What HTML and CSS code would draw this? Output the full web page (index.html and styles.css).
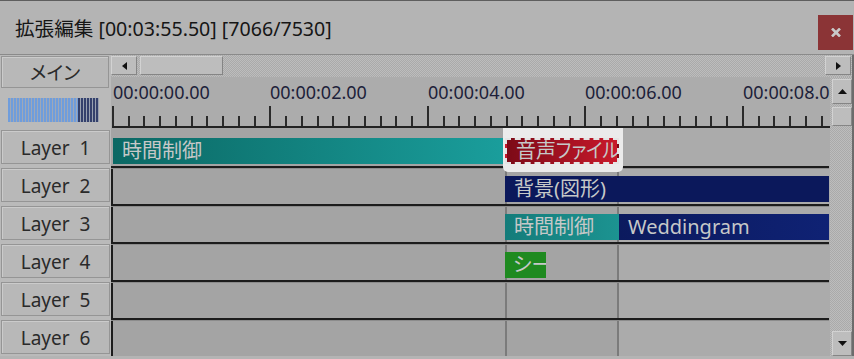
FILE: index.html
```html
<!DOCTYPE html>
<html lang="ja">
<head>
<meta charset="utf-8">
<title>拡張編集</title>
<link rel="stylesheet" href="styles.css">
</head>
<body>
<div class="window">
  <header class="titlebar">
    <span class="title">拡張編集 [00:03:55.50] [7066/7530]</span>
    <div class="close"><svg width="10" height="9" viewBox="0 0 10 9"><path d="M1 0.5L9 8.5M9 0.5L1 8.5" stroke="#c9c9c9" stroke-width="2.6"/></svg></div>
  </header>
  <div class="main">
    <div class="side-top">
      <div class="btn main-btn">メイン</div>
      <div class="meter-panel"><div class="meter"><div class="meter-low"></div><div class="meter-high"></div></div></div>
    </div>
    <div class="hscroll">
      <div class="sb-btn sb-left"><svg width="5" height="8" viewBox="0 0 5 8"><path d="M5 0V8L0 4Z" fill="#111"/></svg></div>
      <div class="sb-btn sb-thumb"></div>
      <div class="sb-track"></div>
      <div class="sb-btn sb-right"><svg width="5" height="8" viewBox="0 0 5 8"><path d="M0 0V8L5 4Z" fill="#111"/></svg></div>
    </div>
    <div class="ruler">
      <span class="tick-label" style="left:2px">00:00:00.00</span>
      <span class="tick-label" style="left:159px">00:00:02.00</span>
      <span class="tick-label" style="left:317px">00:00:04.00</span>
      <span class="tick-label" style="left:474px">00:00:06.00</span>
      <span class="tick-label" style="left:632px">00:00:08.00</span>
      <svg class="ticks" width="719" height="51" viewBox="0 0 719 51">
        <path d="M18 39V49M33 39V49M49 39V49M65 39V49M81 39V49M96 39V49M112 39V49M128 39V49M144 39V49M175 39V49M191 39V49M207 39V49M222 39V49M238 39V49M254 39V49M270 39V49M285 39V49M301 39V49M333 39V49M348 39V49M364 39V49M380 39V49M396 39V49M411 39V49M427 39V49M443 39V49M459 39V49M490 39V49M506 39V49M522 39V49M537 39V49M553 39V49M569 39V49M585 39V49M600 39V49M616 39V49M648 39V49M663 39V49M679 39V49M695 39V49M711 39V49M2 29V49M159 29V49M317 29V49M474 29V49M632 29V49" stroke="#2a2a2a" stroke-width="2" fill="none"/>
        <rect x="1" y="49" width="718" height="2" fill="#222"/>
      </svg>
    </div>
    <div class="vscroll">
      <div class="sb-btn vs-up"><svg width="9" height="5" viewBox="0 0 9 5"><path d="M0 5H9L4.5 0Z" fill="#111"/></svg></div>
      <div class="sb-btn vs-thumb"></div>
      <div class="vs-track"></div>
      <div class="sb-btn vs-down"><svg width="9" height="5" viewBox="0 0 9 5"><path d="M0 0H9L4.5 5Z" fill="#111"/></svg></div>
    </div>
    <div class="layer-heads">
      <div class="btn layer-btn">Layer  1</div>
      <div class="btn layer-btn">Layer  2</div>
      <div class="btn layer-btn">Layer  3</div>
      <div class="btn layer-btn">Layer  4</div>
      <div class="btn layer-btn">Layer  5</div>
      <div class="btn layer-btn">Layer  6</div>
    </div>
    <div class="tracks">
      <div class="vline" style="left:394px"></div>
      <div class="vline" style="left:506px"></div>
      <div class="row">
        <div class="obj teal-dark" style="left:2px;width:392px">時間制御</div>
        <div class="sel-glow" style="left:392px;width:120px"></div>
        <div class="obj audio selected" style="left:394px;width:114px">音声<span class="kana">ファイル</span></div>
      </div>
      <div class="row sep">
        <div class="obj navy" style="left:394px;width:324px">背景(図形)</div>
      </div>
      <div class="row sep">
        <div class="obj teal" style="left:394px;width:114px">時間制御</div>
        <div class="obj navy-light" style="left:508px;width:210px">Weddingram</div>
      </div>
      <div class="row sep">
        <div class="obj green" style="left:394px;width:41px">シー</div>
      </div>
      <div class="row sep"></div>
      <div class="row sep"></div>
    </div>
  </div>
</div>
</body>
</html>
```

FILE: styles.css
```css
* { box-sizing: border-box; margin: 0; padding: 0; }

html, body {
  width: 854px;
  height: 359px;
  overflow: hidden;
}

body {
  background: #b4b4b4;
  font-family: "Noto Sans", "Noto Sans CJK JP", sans-serif;
  color: #1a1a1a;
}

.window {
  width: 854px;
  height: 359px;
  display: flex;
  flex-direction: column;
  border-top: 1px solid #5e5e5e;
}

/* ---------- title bar ---------- */
.titlebar {
  flex: none;
  height: 54px;
  display: flex;
  align-items: flex-start;
  justify-content: space-between;
  padding-left: 15px;
  border-bottom: 1px solid #8a8a8a;
}

.title {
  font-size: 19.6px;
  line-height: 20px;
  margin-top: 18px;
  white-space: pre;
  color: #161616;
}

.close {
  width: 35px;
  height: 35px;
  margin-top: 14px;
  margin-right: 1px;
  background: #8b3436;
  display: flex;
  align-items: center;
  justify-content: center;
}

/* ---------- main grid ---------- */
.main {
  flex: none;
  display: grid;
  grid-template-columns: 111px 719px 22px;
  grid-template-rows: 22px 51px 228px;
  border-right: 2px solid #6c6c6c;
  background: #bababa;
}

.btn {
  background: #b8b8b8;
  border: 1px solid #959595;
  box-shadow: inset 1px 1px 0 #cbcbcb;
  display: flex;
  align-items: center;
  justify-content: center;
  color: #2a2a2a;
}

.side-top {
  grid-row: 1 / 3;
  grid-column: 1;
  display: flex;
  flex-direction: column;
  padding: 1px 2px 0 1px;
}

.main-btn {
  height: 32px;
  font-size: 19px;
  font-feature-settings: "palt";
}

.meter-panel {
  margin-top: 2px;
  flex: 1;
  display: flex;
  align-items: flex-start;
  padding: 8px 0 0 7px;
}

.meter {
  width: 91px;
  height: 24px;
  display: flex;
}

.meter-low {
  width: 70px;
  background: repeating-linear-gradient(to right, #6f9ddc 0 2px, #9fa8b8 2px 3px);
}

.meter-high {
  flex: 1;
  background: repeating-linear-gradient(to right, #34406c 0 2px, #98a0b0 2px 3px);
}

/* ---------- scrollbars ---------- */
.hscroll, .vscroll {
  background-color: #bdbdbd;
  background-image: repeating-conic-gradient(#aaaaaa 0 25%, transparent 0 50%);
  background-size: 2px 2px;
}

.hscroll {
  grid-row: 1;
  grid-column: 2 / 4;
  display: flex;
  align-items: flex-start;
  padding-top: 1px;
}

.sb-btn {
  background: #bdbdbd;
  border: 1px solid;
  border-color: #d2d2d2 #858585 #858585 #d2d2d2;
  display: flex;
  align-items: center;
  justify-content: center;
}

.sb-left { width: 26px; height: 19px; }
.sb-thumb { width: 83px; height: 19px; margin-left: 3px; }
.sb-track { flex: 1; }
.sb-right { width: 26px; height: 19px; margin-right: 1px; }

.vscroll {
  grid-row: 2 / 4;
  grid-column: 3;
  display: flex;
  flex-direction: column;
  padding-left: 2px;
}

.vs-up { height: 25px; margin-top: 2px; }
.vs-thumb { height: 19px; margin-top: 3px; }
.vs-track { flex: 1; }
.vs-down { height: 25px; }

/* ---------- ruler ---------- */
.ruler {
  grid-row: 2;
  grid-column: 2;
  position: relative;
  overflow: hidden;
  background: #acacac;
}

.tick-label {
  position: absolute;
  top: 6px;
  font-size: 18px;
  line-height: 18px;
  color: #1d1f3a;
  white-space: nowrap;
}

.ticks {
  position: absolute;
  left: 0;
  top: 0;
}

/* ---------- layer headers ---------- */
.layer-heads {
  grid-row: 3;
  grid-column: 1;
  display: flex;
  flex-direction: column;
  padding-left: 1px;
  padding-right: 1px;
}

.layer-btn {
  height: 34px;
  margin: 2px 0;
  font-size: 19px;
  white-space: pre;
  padding-top: 1px;
}

/* ---------- tracks ---------- */
.tracks {
  grid-row: 3;
  grid-column: 2;
  position: relative;
  overflow: hidden;
  background: linear-gradient(to right, #a4a4a4 507px, #ababab 507px);
}

.vline {
  position: absolute;
  top: 0;
  bottom: 0;
  width: 2px;
  background: #7b7b7b;
}

.row {
  position: relative;
  height: 38px;
}

.row.sep {
  box-shadow: inset 2px 0 0 #1c1c1c;
}

.row.sep::before {
  content: "";
  position: absolute;
  left: 0;
  right: 1px;
  top: 0;
  height: 2px;
  background: #1c1c1c;
  box-shadow: 0 1px 0 #8c8c8c;
}

.obj {
  position: absolute;
  top: 10px;
  height: 26px;
  padding-left: 9px;
  font-size: 20px;
  line-height: 26px;
  color: #c6c8c8;
  white-space: nowrap;
  overflow: hidden;
  font-feature-settings: "palt";
}

.teal-dark { background: linear-gradient(to right, #0b6864, #1a9e9c); }
.teal { background: linear-gradient(to right, #147c7a, #1c9391); }
.navy { background: #0b185b; }
.navy-light { background: linear-gradient(to right, #0b1a5e, #0f2274); }
.green { background: #1f8a20; padding-left: 8px; }

.audio {
  background: linear-gradient(to right, #7c0a17, #c9192b);
  z-index: 2;
  padding-left: 9px;
}

.kana {
  display: inline-block;
  transform: scaleX(0.92);
  transform-origin: left center;
}

.selected {
  border: 2px dashed #e4e4e4;
  line-height: 22px;
}

.sel-glow {
  position: absolute;
  top: -1px;
  height: 45px;
  background: #ebebeb;
  border-radius: 0 0 5px 5px;
  z-index: 1;
}
```
